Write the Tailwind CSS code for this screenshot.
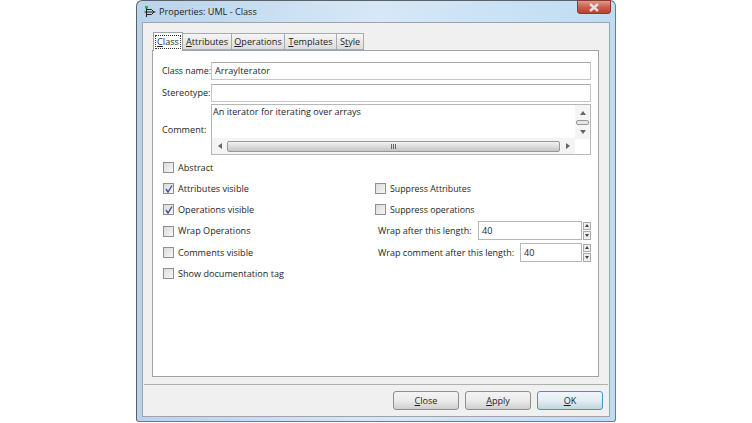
<!DOCTYPE html>
<html lang="en">
<head>
  <meta charset="UTF-8" />
  <title>Properties: UML - Class</title>
  <script src="https://cdn.jsdelivr.net/npm/@tailwindcss/browser@4"></script>
</head>
<body class="w-[752px] h-[423px] overflow-hidden bg-white font-['Open_Sans',sans-serif] text-[9.1px] leading-[14px] whitespace-nowrap text-[#1e1e1e]">

  <!-- Window -->
  <div class="ml-[136px] w-[480px] h-[422px] flex flex-col rounded-t-[6px] rounded-b-[3px] border border-[#5a6268] border-r-[#3f8f9f] border-b-[#3f8f9f] bg-gradient-to-r from-[#b9d3ea] via-[#d6e8f7] to-[#bfdcf2] px-[5px]">

    <!-- Title bar -->
    <div class="h-[21px] shrink-0 flex items-center relative">
      <svg width="14" height="12" viewBox="0 0 14 12" class="ml-[1px]" fill="none" stroke="#222" stroke-width="1">
        <path d="M3.500 1v10M3.500 3.500h5l2.500 2.500-2.500 2.500h-5M1.500 6h11" />
        <rect x="2" y="0" width="3" height="2.500" fill="#3a3" stroke="none" />
      </svg>
      <span class="ml-[2px] text-[#222]">Properties: UML - Class</span>
      <div class="absolute right-[-1px] top-[-1px] w-[34px] h-[14px] rounded-b-[3px] border border-[#8a3a30] bg-gradient-to-b from-[#dd9a8c] via-[#c9604e] to-[#b9402e] flex items-center justify-center">
        <svg width="12" height="9" viewBox="0 0 12 9"><path d="M2 1l8 7M10 1l-8 7" stroke="#e8e2de" stroke-width="2.400" /></svg>
      </div>
    </div>

    <!-- Client area -->
    <div class="flex-1 flex flex-col mb-[4px] border border-[#a0a4a8] bg-[#f0f0f0]">
      <div class="h-[361px] shrink-0 px-[9px] pt-[10px]">

        <!-- Tabs -->
        <div class="flex items-end h-[17px] pl-[1px]">
          <div class="relative z-10 h-[19px] -mb-[1px] w-[30px] bg-white border border-b-0 border-[#9ea3a8] flex items-center justify-center">
            <span class="border border-dotted border-[#333] px-[1px] leading-[12px]"><u>C</u>lass</span>
          </div>
          <div class="h-[17px] w-[49px] border border-l-0 border-[#a8acb0] bg-gradient-to-b from-[#f6f6f6] to-[#dcdcdc] flex items-center justify-center"><span><u>A</u>ttributes</span></div>
          <div class="h-[17px] w-[53px] border border-l-0 border-[#a8acb0] bg-gradient-to-b from-[#f6f6f6] to-[#dcdcdc] flex items-center justify-center"><span><u>O</u>perations</span></div>
          <div class="h-[17px] w-[52px] border border-l-0 border-[#a8acb0] bg-gradient-to-b from-[#f6f6f6] to-[#dcdcdc] flex items-center justify-center"><span><u>T</u>emplates</span></div>
          <div class="h-[17px] w-[27px] border border-l-0 border-[#a8acb0] bg-gradient-to-b from-[#f6f6f6] to-[#dcdcdc] flex items-center justify-center"><span>S<u>t</u>yle</span></div>
        </div>

        <!-- Panel -->
        <div class="w-[447px] h-[327px] border border-[#9ea3a8] bg-white pl-[9px] pr-[7px] pt-[11px]">

          <div class="flex items-center h-[18px]">
            <span class="w-[49px] shrink-0 text-[8.8px]">Class name:</span>
            <div class="flex-1 h-[18px] border border-[#c4c8cc] border-t-[#a8acb0] pl-[3px] flex items-center">ArrayIterator</div>
          </div>
          <div class="flex items-center h-[18px] mt-[4px]">
            <span class="w-[49px] shrink-0">Stereotype:</span>
            <div class="flex-1 h-[18px] border border-[#c4c8cc] border-t-[#a8acb0]"></div>
          </div>

          <!-- Comment box with scrollbars -->
          <div class="flex items-center h-[51px] mt-[2px]">
            <span class="w-[49px] shrink-0">Comment:</span>
            <div class="flex-1 h-[51px] border border-[#b4b8bc] flex">
              <div class="flex-1 flex flex-col">
                <div class="flex-1 pl-[1px]">An iterator for iterating over arrays</div>
                <div class="h-[16px] flex items-center bg-[#f4f4f4]">
                  <div class="w-[15px] flex justify-center"><svg width="4" height="6" viewBox="0 0 4 6"><path d="M4 0v6L0 3z" fill="#666" /></svg></div>
                  <div class="flex-1 h-[11px] mt-[1px] rounded-[2px] border border-[#989898] bg-gradient-to-b from-[#f2f2f2] via-[#dcdcdc] to-[#c4c4c4] flex items-center justify-center gap-[1px]">
                    <span class="w-[1px] h-[5px] bg-[#666]"></span><span class="w-[1px] h-[5px] bg-[#666]"></span><span class="w-[1px] h-[5px] bg-[#666]"></span>
                  </div>
                  <div class="w-[15px] flex justify-center"><svg width="4" height="6" viewBox="0 0 4 6"><path d="M0 0v6l4-3z" fill="#666" /></svg></div>
                </div>
              </div>
              <div class="w-[15px] flex flex-col bg-[#f4f4f4]">
                <div class="h-[15px] flex items-center justify-center"><svg width="6" height="4" viewBox="0 0 6 4"><path d="M0 4h6L3 0z" fill="#666" /></svg></div>
                <div class="h-[5px] mx-[1px] rounded-[2px] border border-[#989898] bg-[#e4e4e4]"></div>
                <div class="h-[14px] flex items-center justify-center"><svg width="6" height="4" viewBox="0 0 6 4"><path d="M0 0h6L3 4z" fill="#666" /></svg></div>
                <div class="flex-1 bg-white"></div>
              </div>
            </div>
          </div>

          <!-- Checkbox rows -->
          <div class="flex items-center h-[11px] mt-[7px]">
            <span class="ml-[1px] w-[11px] h-[11px] border border-[#8e8f8f] bg-gradient-to-br from-[#dcdcdc] to-[#f6f6f6]"></span>
            <span class="ml-[4px]">Abstract</span>
          </div>

          <div class="grid grid-cols-[212px_1fr] mt-[5px]">
            <div>
              <div class="flex items-center h-[21px]">
                <span class="ml-[1px] w-[11px] h-[11px] border border-[#8e8f8f] bg-gradient-to-br from-[#dcdcdc] to-[#f6f6f6] flex items-center justify-center">
                  <svg width="8" height="8" viewBox="0 0 8 8" fill="none"><path d="M1 4l2 3 4-6.500" stroke="#3f4f9a" stroke-width="1.400" /></svg>
                </span>
                <span class="ml-[4px]">Attributes visible</span>
              </div>
              <div class="flex items-center h-[21px]">
                <span class="ml-[1px] w-[11px] h-[11px] border border-[#8e8f8f] bg-gradient-to-br from-[#dcdcdc] to-[#f6f6f6] flex items-center justify-center">
                  <svg width="8" height="8" viewBox="0 0 8 8" fill="none"><path d="M1 4l2 3 4-6.500" stroke="#3f4f9a" stroke-width="1.400" /></svg>
                </span>
                <span class="ml-[4px]">Operations visible</span>
              </div>
              <div class="flex items-center h-[22px]">
                <span class="ml-[1px] w-[11px] h-[11px] border border-[#8e8f8f] bg-gradient-to-br from-[#dcdcdc] to-[#f6f6f6]"></span>
                <span class="ml-[4px]">Wrap Operations</span>
              </div>
              <div class="flex items-center h-[21px]">
                <span class="ml-[1px] w-[11px] h-[11px] border border-[#8e8f8f] bg-gradient-to-br from-[#dcdcdc] to-[#f6f6f6]"></span>
                <span class="ml-[4px]">Comments visible</span>
              </div>
              <div class="flex items-center h-[21px]">
                <span class="ml-[1px] w-[11px] h-[11px] border border-[#8e8f8f] bg-gradient-to-br from-[#dcdcdc] to-[#f6f6f6]"></span>
                <span class="ml-[4px]">Show documentation tag</span>
              </div>
            </div>

            <div>
              <div class="flex items-center h-[21px]">
                <span class="ml-[1px] w-[11px] h-[11px] border border-[#8e8f8f] bg-gradient-to-br from-[#dcdcdc] to-[#f6f6f6]"></span>
                <span class="ml-[4px] text-[8.8px]">Suppress Attributes</span>
              </div>
              <div class="flex items-center h-[21px]">
                <span class="ml-[1px] w-[11px] h-[11px] border border-[#8e8f8f] bg-gradient-to-br from-[#dcdcdc] to-[#f6f6f6]"></span>
                <span class="ml-[4px] text-[8.8px]">Suppress operations</span>
              </div>
              <div class="flex items-center h-[19px] mt-[1px] pl-[4px]">
                <span class="w-[100px] shrink-0 text-[9px]">Wrap after this length:</span>
                <div class="w-[104px] h-[19px] border border-[#b4b8bc] pl-[3px] flex items-center">40</div>
                <div class="ml-[1px] w-[8px] h-[18px] flex flex-col gap-[1px]">
                  <div class="flex-1 border border-[#aaa] bg-[#eee] flex items-center justify-center"><svg width="4" height="3" viewBox="0 0 4 3"><path d="M0 3h4L2 0z" fill="#444" /></svg></div>
                  <div class="flex-1 border border-[#aaa] bg-[#eee] flex items-center justify-center"><svg width="4" height="3" viewBox="0 0 4 3"><path d="M0 0h4L2 3z" fill="#444" /></svg></div>
                </div>
              </div>
              <div class="flex items-center h-[19px] mt-[3px] pl-[4px]">
                <span class="w-[142px] shrink-0 text-[9px]">Wrap comment after this length:</span>
                <div class="w-[62px] h-[19px] border border-[#b4b8bc] pl-[3px] flex items-center">40</div>
                <div class="ml-[1px] w-[8px] h-[18px] flex flex-col gap-[1px]">
                  <div class="flex-1 border border-[#aaa] bg-[#eee] flex items-center justify-center"><svg width="4" height="3" viewBox="0 0 4 3"><path d="M0 3h4L2 0z" fill="#444" /></svg></div>
                  <div class="flex-1 border border-[#aaa] bg-[#eee] flex items-center justify-center"><svg width="4" height="3" viewBox="0 0 4 3"><path d="M0 0h4L2 3z" fill="#444" /></svg></div>
                </div>
              </div>
            </div>
          </div>
        </div>
      </div>

      <!-- Button bar -->
      <div class="flex-1 mx-[1px] border-t border-[#b0b0b0] flex justify-end items-start gap-[6px] pt-[6px] pr-[5px]">
        <button class="w-[66px] h-[19px] rounded-[3px] border border-[#8e8f8f] bg-gradient-to-b from-[#f4f4f4] via-[#ebebeb] to-[#cfcfcf] text-[#1e1e1e]"><u>C</u>lose</button>
        <button class="w-[66px] h-[19px] rounded-[3px] border border-[#8e8f8f] bg-gradient-to-b from-[#f4f4f4] via-[#ebebeb] to-[#cfcfcf] text-[#1e1e1e]"><u>A</u>pply</button>
        <button class="w-[66px] h-[19px] rounded-[3px] border border-[#3c9ac8] bg-gradient-to-b from-[#eef6fa] via-[#e2eef4] to-[#c4d4dc] text-[#1e1e1e]"><u>O</u>K</button>
      </div>
    </div>
  </div>
</body>
</html>
